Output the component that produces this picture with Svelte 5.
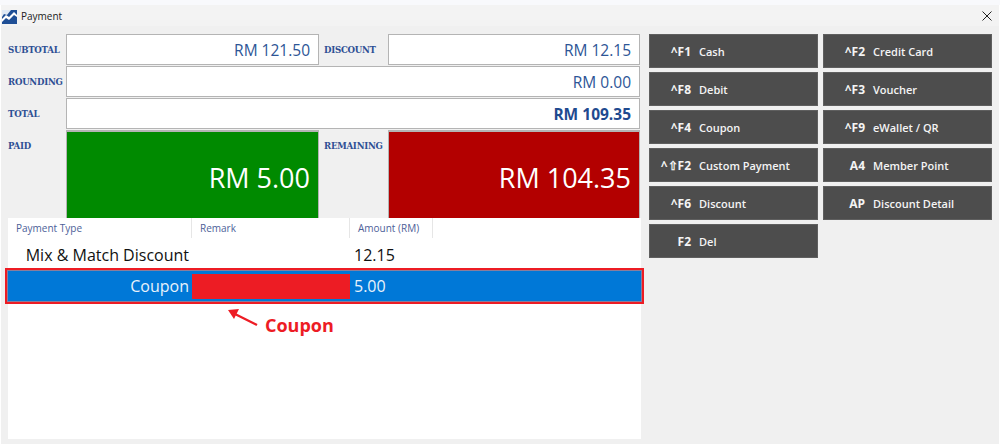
<script>
  const buttons = [
    { key: "^F1", label: "Cash" },
    { key: "^F2", label: "Credit Card" },
    { key: "^F8", label: "Debit" },
    { key: "^F3", label: "Voucher" },
    { key: "^F4", label: "Coupon" },
    { key: "^F9", label: "eWallet / QR" },
    { key: "^⇧F2", label: "Custom Payment" },
    { key: "A4", label: "Member Point" },
    { key: "^F6", label: "Discount" },
    { key: "AP", label: "Discount Detail" },
    { key: "F2", label: "Del" },
  ];
</script>

<div class="top-edge"></div>
<div class="window">
  <header class="titlebar">
    <svg class="logo" width="15" height="14" viewBox="0 0 15 14">
      <rect width="15" height="14" fill="#1f4f96" />
      <path d="M0 0h9L5 5 2 4 0 7z" fill="#dfe9f5" />
      <path d="M0 9l4-4 3 2 5-5 3 3v2l-3-2-5 5-3-2-4 4z" fill="#fff" />
    </svg>
    <span class="title">Payment</span>
    <svg class="close" width="10" height="10" viewBox="0 0 10 10">
      <path d="M.5.5l9 9M9.5.5l-9 9" stroke="#222" stroke-width="1" fill="none" />
    </svg>
  </header>

  <div class="body">
    <section class="left">
      <div class="summary">
        <span class="label">SUBTOTAL</span>
        <div class="box">RM 121.50</div>
        <span class="label second">DISCOUNT</span>
        <div class="box">RM 12.15</div>

        <span class="label">ROUNDING</span>
        <div class="box wide">RM 0.00</div>

        <span class="label">TOTAL</span>
        <div class="box wide total">RM 109.35</div>

        <span class="label top">PAID</span>
        <div class="box big paid">RM 5.00</div>
        <span class="label second top">REMAINING</span>
        <div class="box big remaining">RM 104.35</div>
      </div>

      <div class="table">
        <div class="thead">
          <span class="th first">Payment Type</span>
          <span class="th second-col">Remark</span>
          <span class="th third">Amount (RM)</span>
        </div>
        <div class="row">
          <span class="cell first">Mix &amp; Match Discount</span>
          <span class="cell second-col"></span>
          <span class="cell third">12.15</span>
        </div>
        <div class="row selected">
          <span class="cell first">Coupon</span>
          <span class="cell second-col"><i class="redact"></i></span>
          <span class="cell third">5.00</span>
          <div class="callout"></div>
        </div>
        <svg class="arrow" width="32" height="20" viewBox="0 0 32 20">
          <path d="M30 17L8 6" stroke="#ed1c24" stroke-width="2.4" fill="none" />
          <path d="M1 2l11-1-5 10z" fill="#ed1c24" />
        </svg>
        <span class="note">Coupon</span>
      </div>
    </section>

    <section class="buttons">
      {#each buttons as b}
        <button class="btn">
          <span class="key">{b.key}</span>
          <span class="name">{b.label}</span>
        </button>
      {/each}
    </section>
  </div>
</div>

<style>
  :global(body) {
    margin: 0;
    background: #fff;
    overflow: hidden;
  }
  .top-edge {
    height: 5px;
    background: #f8f9fc;
  }
  .window {
    box-sizing: border-box;
    width: 998px;
    height: 439px;
    margin-left: 1px;
    background: #f0f0f0;
    font-family: "Open Sans", "Noto Sans", sans-serif;
  }
  .titlebar {
    height: 21px;
    display: flex;
    align-items: center;
    background: #f3f3f3;
    padding: 0 7px 0 1px;
    gap: 4px;
  }
  .logo {
    flex: none;
    margin-top: 2px;
  }
  .title {
    flex: 1;
    font-size: 10px;
    color: #222;
  }
  .body {
    display: flex;
    padding: 8px 0 0 7px;
  }
  .left {
    width: 633px;
  }
  .summary {
    display: grid;
    grid-template-columns: 58px 253px 69px 252px;
    grid-template-rows: 31px 31px 31px 88px;
    row-gap: 1px;
    margin-right: -1px;
  }
  .label {
    font-family: "DejaVu Serif", "Liberation Serif", serif;
    font-weight: 700;
    font-size: 8.6px;
    letter-spacing: -0.25px;
    color: #2d4f94;
    align-self: center;
    white-space: nowrap;
    overflow: visible;
  }
  .label.second {
    padding-left: 5px;
  }
  .label.top {
    align-self: start;
    padding-top: 11px;
  }
  .box {
    box-sizing: border-box;
    background: #fff;
    border: 1px solid #b4b4b4;
    display: flex;
    align-items: center;
    justify-content: flex-end;
    padding-right: 8px;
    font-size: 15.5px;
    color: #2d5596;
  }
  .wide {
    grid-column: 2 / 5;
  }
  .total {
    font-weight: 700;
    color: #1f4a8f;
  }
  .big {
    font-size: 27px;
    color: #fff;
    padding-top: 4px;
    border-width: 2px 1px 0;
  }
  .paid {
    background: #008a00;
  }
  .remaining {
    background: #b30000;
  }
  .table {
    position: relative;
    height: 221px;
    background: #fff;
  }
  .thead,
  .row {
    display: grid;
    grid-template-columns: 184px 158px 83px 1fr;
  }
  .thead {
    height: 22px;
    align-items: stretch;
  }
  .th {
    display: flex;
    align-items: center;
    font-size: 10px;
    color: #4d6199;
    padding-left: 8px;
    border-right: 1px solid #e6e6e6;
    height: 20px;
  }
  .th.first {
    padding-left: 8px;
  }
  .row {
    height: 30px;
    align-items: center;
    font-size: 16px;
    color: #111;
  }
  .cell.first {
    text-align: right;
    padding-right: 3px;
  }
  .cell.third {
    padding-left: 4px;
  }
  .selected {
    position: relative;
    height: 32px;
    background: #0078d7;
    color: #e8f2fb;
  }
  .redact {
    display: block;
    width: 158px;
    height: 25px;
    background: #ed1c24;
  }
  .callout {
    position: absolute;
    left: -3px;
    right: -3px;
    top: -2px;
    bottom: -2px;
    border: 2px solid #ed1c24;
    outline: 1px solid #8a7d9c;
    outline-offset: -3px;
  }
  .arrow {
    position: absolute;
    left: 219px;
    top: 90px;
  }
  .note {
    position: absolute;
    left: 257px;
    top: 95px;
    font-size: 18px;
    font-weight: 700;
    color: #ed1c24;
  }
  .buttons {
    margin-left: 8px;
    display: grid;
    grid-template-columns: 169px 169px;
    grid-auto-rows: 34px;
    gap: 4px 5px;
    align-content: start;
  }
  .btn {
    display: grid;
    grid-template-columns: 41px 1fr;
    column-gap: 8px;
    align-items: center;
    padding: 0;
    background: #4d4d4d;
    border: 1px solid #5f5f5f;
    font-family: inherit;
    font-size: 11px;
    font-weight: 600;
    color: #f4f4f4;
    text-align: left;
  }
  .key {
    font-size: 12px;
    font-weight: 700;
    text-align: right;
    white-space: nowrap;
  }
  .name {
    white-space: nowrap;
  }
</style>
